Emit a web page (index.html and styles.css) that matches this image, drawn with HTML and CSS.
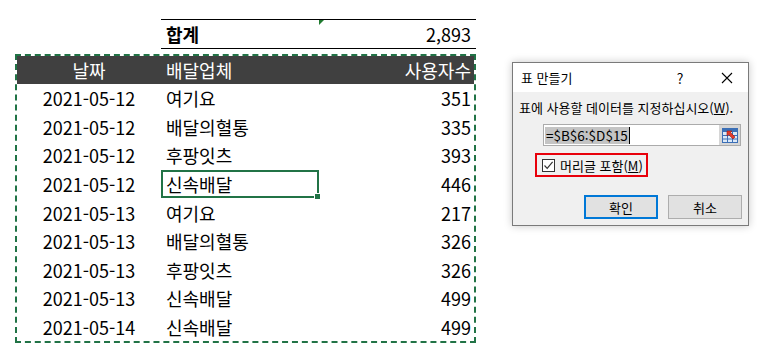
FILE: index.html
```html
<!DOCTYPE html>
<html lang="ko">
<head>
<meta charset="utf-8">
<link rel="stylesheet" href="styles.css">
</head>
<body>
<div class="page">
  <div class="sheet">
    <div class="total">
      <span class="total-label">합계</span>
      <span class="total-value">2,893</span>
      <span class="err-mark"></span>
    </div>
    <div class="table">
      <div class="row head">
        <div class="c-date">날짜</div>
        <div class="c-name">배달업체</div>
        <div class="c-num">사용자수</div>
      </div>
      <div class="row"><div class="c-date">2021-05-12</div><div class="c-name">여기요</div><div class="c-num">351</div></div>
      <div class="row"><div class="c-date">2021-05-12</div><div class="c-name">배달의혈통</div><div class="c-num">335</div></div>
      <div class="row"><div class="c-date">2021-05-12</div><div class="c-name">후팡잇츠</div><div class="c-num">393</div></div>
      <div class="row"><div class="c-date">2021-05-12</div><div class="c-name selected">신속배달<span class="handle"></span></div><div class="c-num">446</div></div>
      <div class="row"><div class="c-date">2021-05-13</div><div class="c-name">여기요</div><div class="c-num">217</div></div>
      <div class="row"><div class="c-date">2021-05-13</div><div class="c-name">배달의혈통</div><div class="c-num">326</div></div>
      <div class="row"><div class="c-date">2021-05-13</div><div class="c-name">후팡잇츠</div><div class="c-num">326</div></div>
      <div class="row"><div class="c-date">2021-05-13</div><div class="c-name">신속배달</div><div class="c-num">499</div></div>
      <div class="row"><div class="c-date">2021-05-14</div><div class="c-name">신속배달</div><div class="c-num">499</div></div>
    </div>
  </div>

  <div class="dialog">
    <div class="titlebar">
      <span class="title">표 만들기</span>
      <span class="tb-help">?</span>
      <span class="tb-close">
        <svg width="12" height="12" viewBox="0 0 12 12"><path d="M1 1 L11 11 M11 1 L1 11" stroke="#000" stroke-width="1.1" fill="none"/></svg>
      </span>
    </div>
    <div class="dbody">
      <div class="prompt">표에 사용할 데이터를 지정하십시오(<u>W</u>).</div>
      <div class="range">
        <div class="range-field"><span class="sel">=$B$6:$D$15</span><span class="caret"></span></div>
        <div class="range-btn">
          <svg width="16" height="15" viewBox="0 0 16 15">
            <rect x="0.5" y="0.5" width="15" height="14" fill="#dbe8f7" stroke="#3b6fb6"/>
            <rect x="1" y="1" width="14" height="3" fill="#3b6fb6"/>
            <path d="M1 7.5 H15 M1 11 H15 M5.5 4 V14 M10.5 4 V14" stroke="#3b6fb6" stroke-width="1"/>
            <path d="M5 3 L10 3 L8.6 4.6 L13 9 L11 11 L6.6 6.6 L5 8 Z" fill="#e23a2a" stroke="#a01a10" stroke-width="0.6"/>
          </svg>
        </div>
      </div>
      <div class="check-wrap">
        <label class="check">
          <span class="box">
            <svg width="11" height="11" viewBox="0 0 11 11"><path d="M1.5 5.5 L4.2 8.3 L9.6 1.8" stroke="#333" stroke-width="1.2" fill="none"/></svg>
          </span>
          <span>머리글 포함(<u>M</u>)</span>
        </label>
      </div>
      <div class="buttons">
        <button class="btn primary">확인</button>
        <button class="btn">취소</button>
      </div>
    </div>
  </div>
</div>
</body>
</html>
```

FILE: styles.css
```css
html, body {
  margin: 0;
  padding: 0;
  background: #fff;
}
body {
  font-family: "Noto Sans CJK KR", "Noto Sans", sans-serif;
  color: #000;
}
.page {
  position: relative;
  width: 757px;
  height: 350px;
  overflow: hidden;
}
.sheet {
  padding-top: 19px;
  padding-left: 15px;
}
.total {
  position: relative;
  margin-left: 146px;
  width: 305px;
  height: 28px;
  padding: 0 5px;
  border-top: 1px solid #000;
  border-bottom: 1px solid #000;
  display: flex;
  justify-content: space-between;
  align-items: center;
  font-size: 18px;
  line-height: 28px;
}
.total-label {
  font-weight: bold;
}
.err-mark {
  position: absolute;
  left: 158px;
  top: 0;
  width: 0;
  height: 0;
  border-top: 5px solid #1f7a2f;
  border-right: 5px solid transparent;
}
.table {
  margin-top: 5px;
  width: 457px;
  border: 2px dashed #217346;
  background: #fff;
  font-size: 18px;
}
.row {
  display: grid;
  grid-template-columns: 144px 158px 155px;
  grid-template-rows: 100%;
  height: 28.6px;
  align-items: center;
  line-height: 24px;
}
.row.head {
  height: 28px;
  background: #404040;
  color: #fff;
}
.c-date {
  text-align: center;
}
.c-name {
  padding-left: 5px;
  height: 100%;
  box-sizing: border-box;
  display: flex;
  align-items: center;
}
.c-num {
  text-align: right;
  padding-right: 3px;
}
.selected {
  position: relative;
  border: 2px solid #217346;
  padding-left: 3px;
}
.handle {
  position: absolute;
  right: -4px;
  bottom: -4px;
  width: 5px;
  height: 5px;
  background: #217346;
  border: 1px solid #fff;
}
.dialog {
  position: absolute;
  left: 512px;
  top: 62px;
  width: 235px;
  height: 162px;
  border: 1px solid #7a7a7a;
  background: #f0f0f0;
  box-shadow: 0 0 8px rgba(0, 0, 0, 0.22);
  font-size: 13px;
  display: flex;
  flex-direction: column;
}
.titlebar {
  height: 29px;
  background: #fff;
  display: flex;
  align-items: center;
  padding-left: 8px;
}
.title {
  flex: 1;
}
.tb-help {
  width: 20px;
  text-align: center;
  margin-right: 26px;
  font-size: 14px;
}
.tb-close {
  width: 22px;
  margin-right: 10px;
  display: flex;
  justify-content: center;
}
.dbody {
  flex: 1;
  padding: 6px 6px 0 6px;
  display: flex;
  flex-direction: column;
}
.prompt {
  height: 20px;
  line-height: 20px;
  white-space: nowrap;
}
.range {
  margin-top: 6px;
  margin-left: 24px;
  height: 22px;
  width: 198px;
  box-sizing: border-box;
  border: 1px solid #ababab;
  display: flex;
  background: #fff;
}
.range-field {
  flex: 1;
  display: flex;
  align-items: center;
  padding-left: 1px;
}
.sel {
  background: #c4c4c4;
  line-height: 17px;
  padding: 0 1px;
  font-size: 13.5px;
}
.caret {
  width: 1px;
  height: 17px;
  background: #000;
}
.range-btn {
  width: 21px;
  background: #d6d6d6;
  display: flex;
  align-items: center;
  justify-content: center;
}
.check-wrap {
  margin-top: 7px;
  margin-left: 16px;
}
.check {
  width: 113px;
  height: 24px;
  box-sizing: border-box;
  border: 2px solid #e8000b;
  display: flex;
  align-items: center;
  padding-left: 5px;
  gap: 5px;
}
.box {
  width: 11px;
  height: 11px;
  border: 1px solid #333;
  background: #fff;
  display: flex;
}
.buttons {
  margin-top: 18px;
  display: flex;
  justify-content: flex-end;
  gap: 10px;
  padding-right: 0;
}
.btn {
  font-family: "Noto Sans CJK KR", "Noto Sans", sans-serif;
  font-size: 13px;
  height: 24px;
  width: 74px;
  background: #e1e1e1;
  border: 1px solid #adadad;
  padding: 0;
  color: #000;
}
.btn.primary {
  border: 2px solid #0078d7;
}
```
